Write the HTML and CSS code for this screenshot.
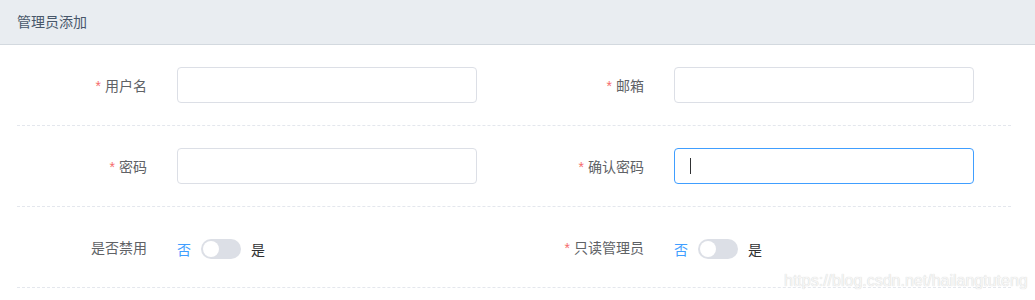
FILE: index.html
```html
<!DOCTYPE html>
<html lang="zh-CN">
<head>
    <meta charset="UTF-8">
    <meta name="viewport" content="width=device-width, initial-scale=1.0">
    <title>管理员添加</title>
    <link rel="stylesheet" href="styles.css">
</head>
<body>
    <div class="panel">
        <div class="panel-header">管理员添加</div>
        <div class="panel-body">
            <div class="form-row">
                <div class="form-item">
                    <label class="form-label required">用户名</label>
                    <div class="input-wrap"><input class="input" type="text"></div>
                </div>
                <div class="form-item">
                    <label class="form-label required">邮箱</label>
                    <div class="input-wrap"><input class="input" type="text"></div>
                </div>
            </div>
            <div class="form-row">
                <div class="form-item">
                    <label class="form-label required">密码</label>
                    <div class="input-wrap"><input class="input" type="password"></div>
                </div>
                <div class="form-item">
                    <label class="form-label required">确认密码</label>
                    <div class="input-wrap">
                        <input class="input is-focus" type="password">
                        <span class="caret"></span>
                    </div>
                </div>
            </div>
            <div class="form-row">
                <div class="form-item">
                    <label class="form-label">是否禁用</label>
                    <div class="switch">
                        <span class="switch-label is-active">否</span>
                        <span class="switch-core"></span>
                        <span class="switch-label">是</span>
                    </div>
                </div>
                <div class="form-item">
                    <label class="form-label required">只读管理员</label>
                    <div class="switch">
                        <span class="switch-label is-active">否</span>
                        <span class="switch-core"></span>
                        <span class="switch-label">是</span>
                    </div>
                </div>
            </div>
        </div>
        <div class="watermark">https://blog.csdn.net/hailangtuteng</div>
    </div>
</body>
</html>
```
FILE: styles.css
```css
html,
body {
    margin: 0;
    padding: 0;
    background-color: #FFF;
    font-family: "Liberation Sans", "Noto Sans CJK SC", sans-serif;
    font-size: 14px;
    color: #606266;
}

.panel {
    position: relative;
    width: 1035px;
    height: 300px;
    overflow: hidden;
}

.panel-header {
    height: 44px;
    line-height: 44px;
    padding-left: 17px;
    background-color: #e9edf1;
    border-bottom: 1px solid #d3d9df;
    color: #48576a;
    font-size: 14px;
}

.panel-body {
    padding: 0 24px 0 17px;
}

.form-row {
    display: flex;
    padding: 22px 0;
    border-bottom: 1px dashed #e4e7ed;
}

.form-item {
    display: flex;
    align-items: center;
    width: 497px;
    height: 36px;
}

.form-label {
    box-sizing: border-box;
    width: 160px;
    padding-right: 30px;
    text-align: right;
    color: #606266;
}

.form-label.required::before {
    content: '*';
    color: #f56c6c;
    margin-right: 4px;
}

.input-wrap {
    position: relative;
    width: 300px;
    height: 36px;
}

.input {
    box-sizing: border-box;
    width: 100%;
    height: 36px;
    padding: 0 15px;
    border: 1px solid #dcdfe6;
    border-radius: 4px;
    outline: none;
    background-color: #FFF;
    font-size: 14px;
}

.input.is-focus {
    border-color: #409eff;
}

.caret {
    position: absolute;
    left: 16px;
    top: 10px;
    width: 1px;
    height: 16px;
    background-color: #303133;
}

.switch {
    display: flex;
    align-items: center;
    height: 20px;
    margin-top: 4px;
}

.switch-label {
    color: #303133;
    font-size: 14px;
}

.switch-label.is-active {
    color: #409eff;
}

.switch-core {
    position: relative;
    box-sizing: border-box;
    width: 40px;
    height: 20px;
    margin: 0 10px;
    border-radius: 10px;
    background-color: #dcdfe6;
}

.switch-core::after {
    content: '';
    position: absolute;
    top: 2px;
    left: 2px;
    width: 16px;
    height: 16px;
    border-radius: 50%;
    background-color: #FFF;
}

.watermark {
    position: absolute;
    left: 784px;
    top: 272px;
    font-size: 16px;
    color: #f6f6f6;
    text-shadow: 0 0 1px #c8c8c8;
}
```
